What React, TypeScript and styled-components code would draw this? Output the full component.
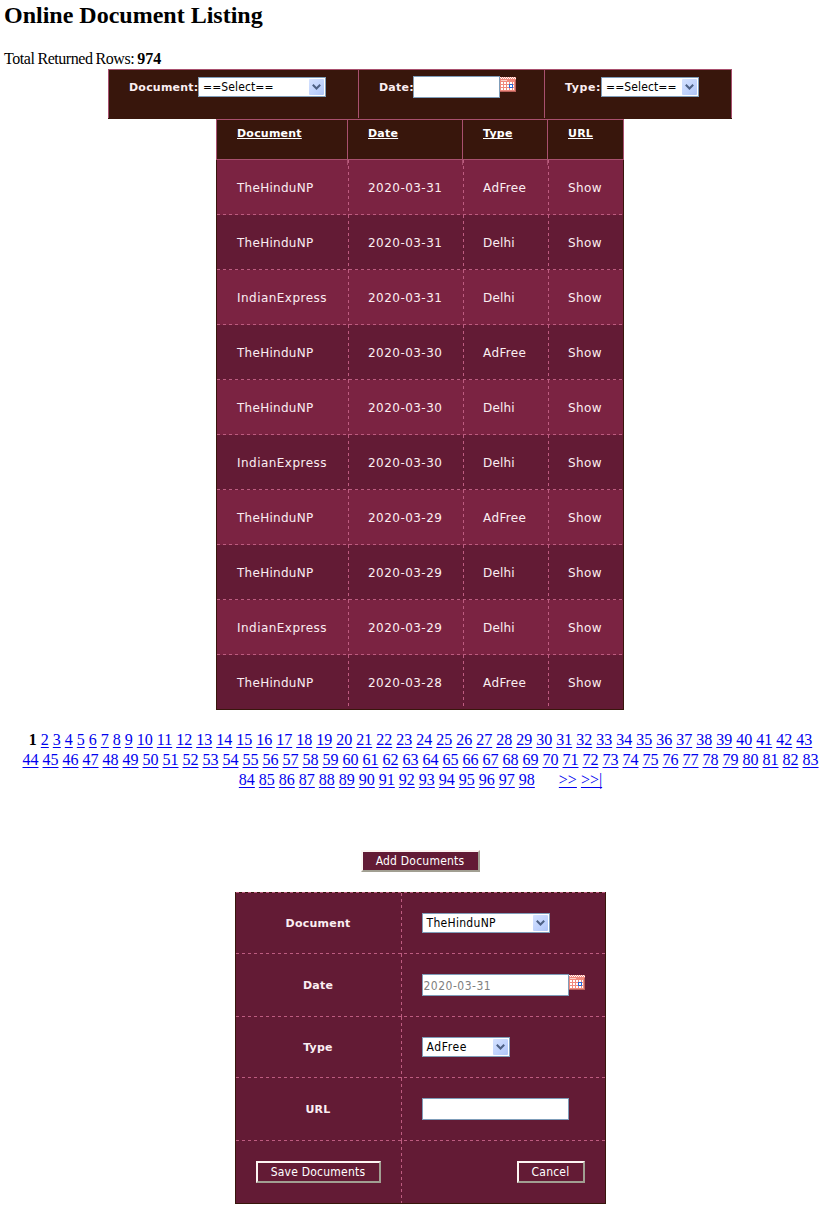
import React from 'react';
import styled, { createGlobalStyle, css } from 'styled-components';

const color = {
  brown: '#38160c',
  wine: '#631b35',
  rose: '#7b2342',
  line: '#a8506e',
  dash: '#bd5c80',
  text: '#fbeef2',
  field: '#7f9db9',
};

const hDash = `repeating-linear-gradient(90deg, ${color.dash} 0 3px, transparent 3px 6px)`;
const vDash = `repeating-linear-gradient(180deg, ${color.dash} 0 3px, transparent 3px 6px)`;

const GlobalStyle = createGlobalStyle`
  * { box-sizing: border-box; }
  html { overflow: hidden; }
  body { margin: 0; background: #fff; color: #000; font: 16px/20px "Liberation Serif", serif; }
`;

const Page = styled.main`
  height: 1211px;
  padding-left: 4px;
  overflow: hidden;
`;
const Title = styled.h2`
  margin: 0;
  padding-top: 1px;
  height: 49px;
  font-size: 24px;
  line-height: 28px;
`;
const Total = styled.div`
  height: 20px;
  b { letter-spacing: 0; }
  word-spacing: -0.5px;
  letter-spacing: -0.45px;
`;
const Center = styled.div`
  display: flex;
  flex-direction: column;
  align-items: center;
  margin-left: 5px;
`;

const FilterBar = styled.div`
  display: grid;
  grid-template-columns: 250px 186px 188px;
  width: 624px;
  height: 50px;
  background: ${color.brown};
  border-bottom: 1px solid ${color.brown};
`;
const FilterCell = styled.div`
  display: flex;
  align-items: flex-start;
  padding: 6px 0 0 20px;
  border-top: 1px solid ${color.line};
  border-left: 1px solid ${color.line};
  &:last-child { border-right: 1px solid ${color.line}; }
`;
const boldText = css`
  font: bold 11px/16px "DejaVu Sans", Verdana, sans-serif;
  letter-spacing: 0.22px;
  color: ${color.text};
  white-space: nowrap;
`;
const FilterLabel = styled.label<{ $w: number; $ls?: number }>`
  ${boldText}
  width: ${p => p.$w}px;
  padding-top: 4px;
  letter-spacing: ${p => p.$ls ?? 0.22}px;
`;

const condensed = css`
  font-family: "DejaVu Sans Condensed", "DejaVu Sans", sans-serif;
  font-stretch: condensed;
  font-size: 12px;
`;
const SelectBox = styled.div<{ $w: number; $gap?: number; $ls?: number }>`
  ${condensed}
  display: flex;
  justify-content: space-between;
  width: ${p => p.$w}px;
  height: 20px;
  margin-top: ${p => p.$gap ?? 0}px;
  padding: 1px 1px 1px 4px;
  border: 1px solid ${color.field};
  background: #fff;
  color: #000;
  line-height: 17px;
  letter-spacing: ${p => p.$ls ?? 0.12}px;
  white-space: nowrap;
`;
const ArrowButton = styled.span`
  display: flex;
  align-items: center;
  justify-content: center;
  flex: none;
  width: 15px;
  height: 16px;
  border-radius: 1px;
  background: linear-gradient(135deg, #d5e2ff, #bfd2fd 60%, #aec5f8);
`;
const TextField = styled.input<{ $w: number }>`
  ${condensed}
  width: ${p => p.$w}px;
  height: 22px;
  margin: 0;
  padding: 2px 1px 1px;
  border: 1px solid ${color.field};
  border-radius: 0;
  outline: 0;
  background: #fff;
  color: #808080;
  letter-spacing: 0.5px;
`;
const CalendarSvg = styled.svg`
  display: block;
  flex: none;
  margin-top: 1px;
`;

const Listing = styled.div`
  width: 408px;
`;
const HeadRow = styled.div`
  display: grid;
  grid-template-columns: 131px 115px 85px 77px;
  height: 41px;
  background: ${color.brown};
  border: solid ${color.line};
  border-width: 1px 0;
`;
const HeadCell = styled.div`
  ${boldText}
  position: relative;
  padding: 6px 0 0 20px;
  color: #fff;
  border-left: 1px solid ${color.line};
  &:last-child { border-right: 1px solid ${color.line}; }
  & + &::after {
    content: '';
    position: absolute;
    left: -1px;
    top: 100%;
    width: 1px;
    height: 6px;
    background: ${color.line};
  }
  a { text-decoration: underline; text-underline-offset: 1px; text-decoration-thickness: 1px; text-decoration-skip-ink: none; }
`;
const Rows = styled.div`
  height: 550px;
  border: solid ${color.brown};
  border-width: 0 1px 1px;
`;
const Row = styled.div<{ $alt: boolean; $last: boolean }>`
  display: grid;
  grid-template-columns: 131px 115px 85px 75px;
  height: ${p => (p.$last ? 54 : 55)}px;
  background: ${p => (p.$last ? '' : `${hDash} 0 100% / 100% 1px no-repeat, `)}${p => (p.$alt ? color.wine : color.rose)};
`;
const Cell = styled.div<{ $ls?: number }>`
  padding: 19px 0 0 20px;
  font: 12px/18px "DejaVu Sans", Verdana, sans-serif;
  letter-spacing: ${p => p.$ls ?? 0.38}px;
  color: ${color.text};
  white-space: nowrap;
  & + & {
    padding-left: 20px;
    background: ${vDash} 0 0 / 1px 100% no-repeat;
  }
`;

const Pager = styled.nav`
  height: 60px;
  margin-top: 20px;
  padding-left: 1px;
  text-align: center;
  white-space: pre;
  a { color: #0000ee; text-decoration: underline; text-underline-offset: 2px; text-decoration-thickness: 1px; text-decoration-skip-ink: none; }
`;

const Button = styled.button<{ $w: number; $top?: number }>`
  ${condensed}
  width: ${p => p.$w}px;
  height: 22px;
  margin: ${p => p.$top ?? 0}px 0 0;
  padding: 0;
  border: 2px solid;
  border-color: #fdf5f3 #a19f92 #a19f92 #fdf5f3;
  background: ${color.wine};
  color: #fff;
  line-height: 18px;
  letter-spacing: 0.22px;
`;

const Form = styled.form`
  width: 371px;
  margin-top: 20px;
  padding-top: 1px;
  border: 1px solid ${color.brown};
  border-top: 0;
  background: ${hDash} 0 0 / 100% 1px no-repeat, linear-gradient(${color.brown}, ${color.brown}) 0 0 / 100% 1px no-repeat, ${color.wine};
`;
const FormRow = styled.div<{ $h: number }>`
  display: grid;
  grid-template-columns: 165px 204px;
  height: ${p => p.$h}px;
  background: ${hDash} 0 100% / 100% 1px no-repeat;
  &:last-child { background: none; }
`;
const FormLabel = styled.div<{ $top?: number }>`
  ${boldText}
  padding-top: ${p => p.$top ?? 23}px;
  text-align: center;
`;
const FormField = styled.div`
  display: flex;
  align-items: flex-start;
  padding: 20px 20px 0 21px;
  background: ${vDash} 0 0 / 1px 100% no-repeat;
`;
const SaveCell = styled.div`
  display: flex;
  justify-content: center;
  align-items: flex-start;
  padding-top: 20px;
`;
const CancelCell = styled(FormField)`
  justify-content: flex-end;
`;

const Select = ({ text, w, gap, ls }: { text: string; w: number; gap?: number; ls?: number }) => (
  <SelectBox $w={w} $gap={gap} $ls={ls}>
    {text}
    <ArrowButton>
      <svg width="9" height="6" viewBox="0 0 9 6" fill="none" stroke="#4d6185" strokeWidth="2">
        <path d="M.8.8 4.5 4.5 8.2.8" />
      </svg>
    </ArrowButton>
  </SelectBox>
);

const Calendar = () => (
  <CalendarSvg width="16" height="15" viewBox="0 0 16 15" shapeRendering="crispEdges">
    <path fill="#f08a7e" d="M0 0h16v15H0z" />
    <path fill="#b8605a" d="M15 3h1v12H0v-1h15z" />
    <path stroke="#fff" strokeDasharray="1 1" d="M0 .5h16M1 1.5h15" />
    <path fill="#fbd0c8" d="M1 3h6v1H1z" />
    <path stroke="#fff" strokeWidth="2" strokeDasharray="2 1" d="M1 6h13M1 9h13M1 12h13" />
    <path fill="#fff" stroke="#2868d8" d="M9.5 7.5h3v3h-3z" />
  </CalendarSvg>
);

const documents = [
  ['TheHinduNP', '2020-03-31', 'AdFree'],
  ['TheHinduNP', '2020-03-31', 'Delhi'],
  ['IndianExpress', '2020-03-31', 'Delhi'],
  ['TheHinduNP', '2020-03-30', 'AdFree'],
  ['TheHinduNP', '2020-03-30', 'Delhi'],
  ['IndianExpress', '2020-03-30', 'Delhi'],
  ['TheHinduNP', '2020-03-29', 'AdFree'],
  ['TheHinduNP', '2020-03-29', 'Delhi'],
  ['IndianExpress', '2020-03-29', 'Delhi'],
  ['TheHinduNP', '2020-03-28', 'AdFree'],
];

const PageLinks = ({ from, to }: { from: number; to: number }) => (
  <>
    {Array.from({ length: to - from + 1 }, (_, i) => (
      <React.Fragment key={i}>
        {i > 0 && ' '}
        <a>{from + i}</a>
      </React.Fragment>
    ))}
  </>
);

export default function App() {
  return (
    <Page>
      <GlobalStyle />
      <Title>Online Document Listing</Title>
      <Total>Total Returned Rows: <b>974</b></Total>
      <Center>
        <FilterBar>
          <FilterCell>
            <FilterLabel $w={69}>Document:</FilterLabel>
            <Select text="==Select==" w={128} gap={1} />
          </FilterCell>
          <FilterCell>
            <FilterLabel $w={34}>Date:</FilterLabel>
            <TextField $w={87} />
            <Calendar />
          </FilterCell>
          <FilterCell>
            <FilterLabel $w={36} $ls={0.6}>Type:</FilterLabel>
            <Select text="==Select==" w={98} gap={1} />
          </FilterCell>
        </FilterBar>
        <Listing>
          <HeadRow>
            {['Document', 'Date', 'Type', 'URL'].map(h => (
              <HeadCell key={h}><a>{h}</a></HeadCell>
            ))}
          </HeadRow>
          <Rows>
            {documents.map(([name, date, type], i) => (
              <Row key={i} $alt={i % 2 === 1} $last={i === documents.length - 1}>
                <Cell $ls={name === 'TheHinduNP' ? 0.28 : 0.46}>{name}</Cell>
                <Cell $ls={0.46}>{date}</Cell>
                <Cell $ls={type === 'Delhi' ? 0.15 : 0.38}>{type}</Cell>
                <Cell>Show</Cell>
              </Row>
            ))}
          </Rows>
        </Listing>
        <Pager>
          <b>1</b> <PageLinks from={2} to={43} />{'\n'}
          <PageLinks from={44} to={83} />{'\n'}
          <PageLinks from={84} to={98} />{'      '}<a>&gt;&gt;</a> <a>&gt;&gt;|</a>
        </Pager>
        <Button $w={119} $top={60}>Add Documents</Button>
        <Form>
          <FormRow $h={61}>
            <FormLabel>Document</FormLabel>
            <FormField><Select text="TheHinduNP" w={128} ls={0.3} /></FormField>
          </FormRow>
          <FormRow $h={63}>
            <FormLabel $top={24}>Date</FormLabel>
            <FormField>
              <TextField $w={147} defaultValue="2020-03-31" />
              <Calendar />
            </FormField>
          </FormRow>
          <FormRow $h={61}>
            <FormLabel>Type</FormLabel>
            <FormField><Select text="AdFree" w={88} ls={0.6} /></FormField>
          </FormRow>
          <FormRow $h={63}>
            <FormLabel $top={24}>URL</FormLabel>
            <FormField><TextField $w={147} /></FormField>
          </FormRow>
          <FormRow $h={62}>
            <SaveCell><Button type="button" $w={125}>Save Documents</Button></SaveCell>
            <CancelCell><Button type="button" $w={68}>Cancel</Button></CancelCell>
          </FormRow>
        </Form>
      </Center>
    </Page>
  );
}
